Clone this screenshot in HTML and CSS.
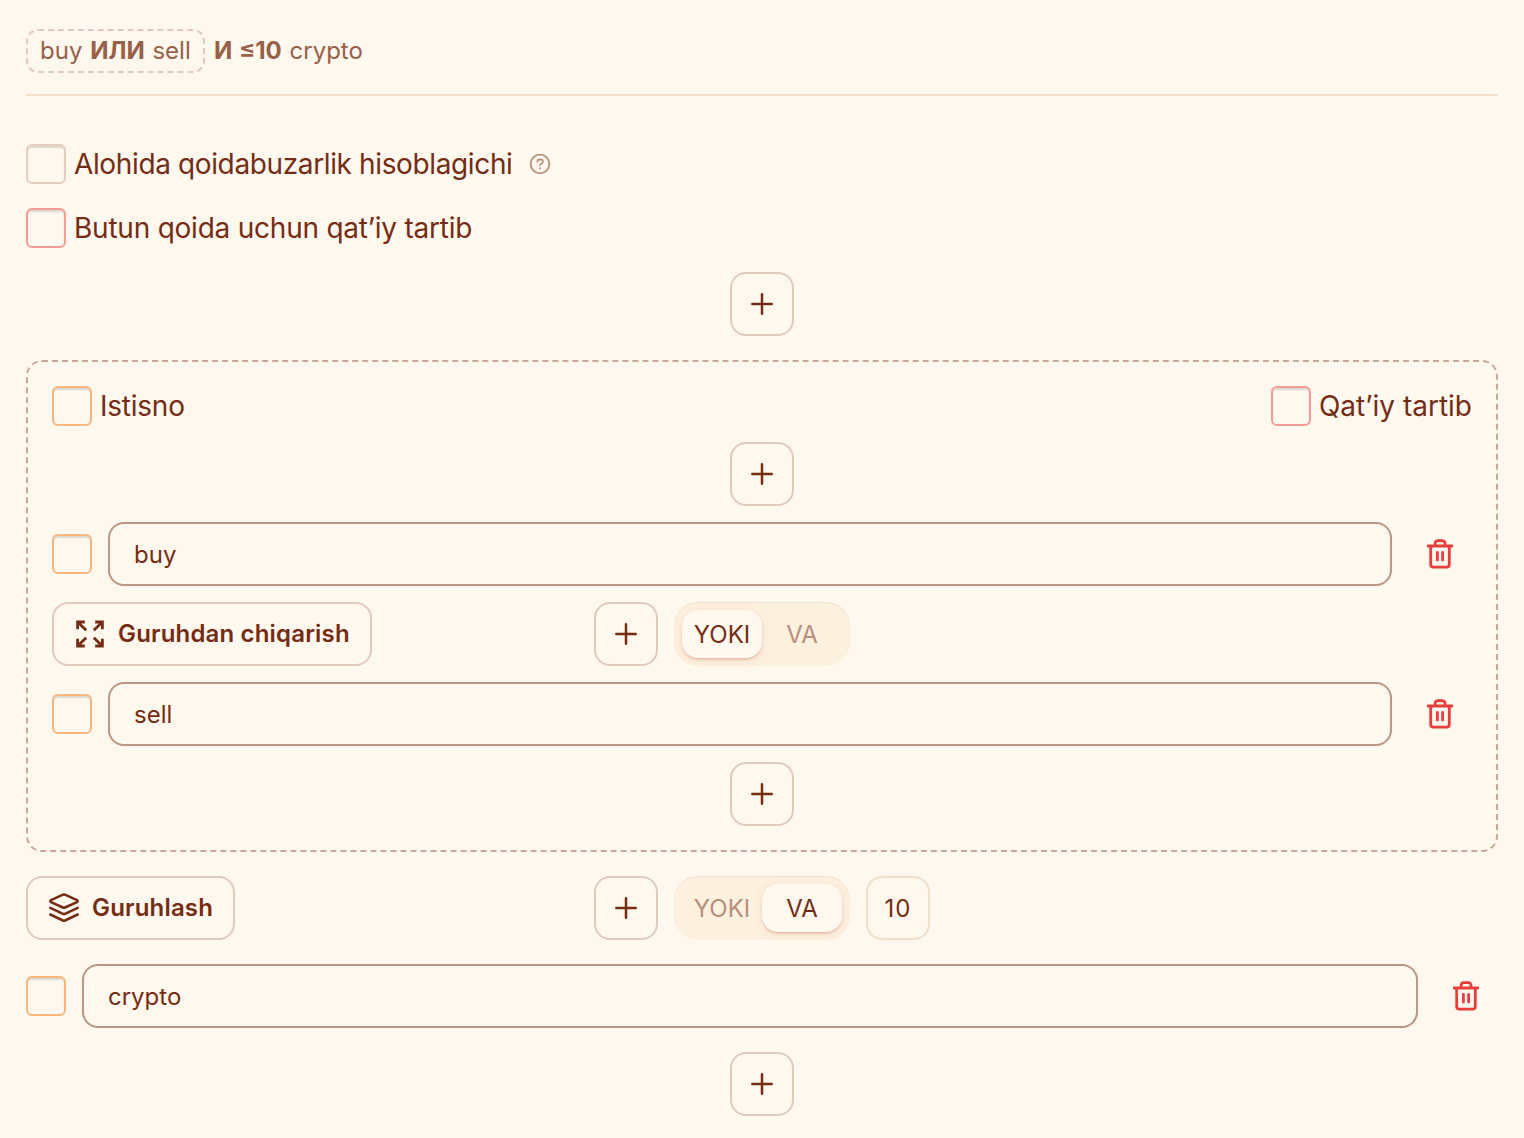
FILE: index.html
```html
<!DOCTYPE html>
<html lang="uz">
<head>
    <meta charset="UTF-8">
    <meta name="viewport" content="width=device-width, initial-scale=1.0">
    <title>Qoida</title>
    <link rel="stylesheet" href="styles.css">
</head>

<body>
    <!-- Icons -->
    <svg class="sprite" width="0" height="0">
        <symbol id="icon-plus" viewBox="0 0 32 32">
            <path d="M16 6.3v19.4M6.3 16h19.4" stroke-width="2.5" stroke-linecap="round"/>
        </symbol>
        <symbol id="icon-trash" viewBox="0 0 32 32">
            <path d="M4.2 8h23.6M6.7 8v18.5a2.7 2.7 0 0 0 2.7 2.7h13.2a2.7 2.7 0 0 0 2.7-2.7V8M11.1 8V5.3a2.6 2.6 0 0 1 2.6-2.6h4.7a2.6 2.6 0 0 1 2.6 2.6V8M13.4 14.5v7.6M18.6 14.5v7.6" stroke-width="2.8" stroke-linecap="round" stroke-linejoin="round"/>
        </symbol>
        <symbol id="icon-expand" viewBox="0 0 32 32">
            <path d="M3.6 11.2V4h7.2M3.6 4l8.6 8.2M21.2 4h7.2v7.2M28.4 4l-8.6 8.2M3.6 20.8V28h7.2M3.6 28l8.6-8.2M21.2 28h7.2v-7.2M28.4 28l-8.6-8.2" stroke-width="2.8"/>
        </symbol>
        <symbol id="icon-layers" viewBox="0 0 32 32">
            <path d="M15 2.6 3 8.1c-1 .5-1 1.5 0 2l12 5.4c.7.3 1.3.3 2 0l12-5.4c1-.5 1-1.5 0-2L17 2.6c-.7-.3-1.3-.3-2 0ZM2.3 15.9 15 21.8c.7.3 1.3.3 2 0l12.7-5.9M2.3 22.5 15 28.5c.7.3 1.3.3 2 0l12.7-6" stroke-width="2.5" stroke-linecap="round" stroke-linejoin="round"/>
        </symbol>
        <symbol id="icon-help" viewBox="0 0 24 24">
            <circle cx="12" cy="12" r="9.3" stroke-width="1.8"/>
            <path d="M9.3 9.6c.2-1.5 1.3-2.3 2.8-2.3 1.6 0 2.8.9 2.8 2.4 0 1.9-2.8 1.9-2.8 3.8M12 16.2v.6" stroke-width="1.7" stroke-linecap="round"/>
        </symbol>
    </svg>

    <main class="rule">
        <header class="summary">
            <span class="summary-group">buy <b>ИЛИ</b> sell</span>
            <span class="summary-rest"><b>И ≤10</b> crypto</span>
        </header>

        <label class="check">
            <input type="checkbox" class="checkbox">
            <span class="text-counter">Alohida qoidabuzarlik hisoblagichi</span>
            <svg class="icon-help"><use href="#icon-help"/></svg>
        </label>
        <label class="check">
            <input type="checkbox" class="checkbox checkbox-error">
            <span class="text-order">Butun qoida uchun qatʼiy tartib</span>
        </label>

        <button class="btn btn-square"><svg class="icon"><use href="#icon-plus"/></svg></button>

        <section class="group">
            <div class="group-head">
                <label class="check">
                    <input type="checkbox" class="checkbox checkbox-warning">
                    <span class="text-except">Istisno</span>
                </label>
                <label class="check">
                    <input type="checkbox" class="checkbox checkbox-error">
                    <span>Qatʼiy tartib</span>
                </label>
            </div>

            <button class="btn btn-square"><svg class="icon"><use href="#icon-plus"/></svg></button>

            <div class="word">
                <input type="checkbox" class="checkbox checkbox-warning">
                <input type="text" class="input" value="buy">
                <button class="btn-delete"><svg class="icon"><use href="#icon-trash"/></svg></button>
            </div>

            <div class="operator">
                <button class="btn btn-wide"><svg class="icon"><use href="#icon-expand"/></svg><span>Guruhdan chiqarish</span></button>
                <div class="operator-controls">
                    <button class="btn btn-square"><svg class="icon"><use href="#icon-plus"/></svg></button>
                    <div class="toggle">
                        <button class="toggle-item active">YOKI</button>
                        <button class="toggle-item">VA</button>
                    </div>
                    <span class="distance-empty"></span>
                </div>
            </div>

            <div class="word">
                <input type="checkbox" class="checkbox checkbox-warning">
                <input type="text" class="input" value="sell">
                <button class="btn-delete"><svg class="icon"><use href="#icon-trash"/></svg></button>
            </div>

            <button class="btn btn-square"><svg class="icon"><use href="#icon-plus"/></svg></button>
        </section>

        <div class="operator">
            <button class="btn btn-wide"><svg class="icon"><use href="#icon-layers"/></svg><span>Guruhlash</span></button>
            <div class="operator-controls">
                <button class="btn btn-square"><svg class="icon"><use href="#icon-plus"/></svg></button>
                <div class="toggle">
                    <button class="toggle-item">YOKI</button>
                    <button class="toggle-item active">VA</button>
                </div>
                <input type="text" class="distance" value="10">
            </div>
        </div>

        <div class="word">
            <input type="checkbox" class="checkbox checkbox-warning">
            <input type="text" class="input" value="crypto">
            <button class="btn-delete"><svg class="icon"><use href="#icon-trash"/></svg></button>
        </div>

        <button class="btn btn-square"><svg class="icon"><use href="#icon-plus"/></svg></button>
    </main>
</body>
</html>
```
FILE: styles.css
```css
* {
    box-sizing: border-box;
}

body {
    margin: 0;
    background-color: #fff8ee;
    color: #742c14;
    font-family: Inter, "Liberation Sans", sans-serif;
    font-size: 28px;
}

button,
input {
    margin: 0;
    padding: 0;
    font-family: inherit;
    color: inherit;
}

svg {
    display: block;
    flex-shrink: 0;
    fill: none;
    stroke: currentColor;
}

.sprite {
    position: absolute;
}

.icon {
    width: 32px;
    height: 32px;
}

.rule {
    display: flex;
    flex-direction: column;
    gap: 24px;
    padding: 29px 26px 22px;
}

/* Rule summary */
.summary {
    display: flex;
    align-items: center;
    gap: 9px;
    height: 67px;
    margin-bottom: 24px;
    padding-bottom: 21px;
    border-bottom: 2px solid #f1dfca;
    color: #976049;
    font-size: 24px;
    line-height: 40px;
    word-spacing: 1px;
    white-space: nowrap;
}

.summary b {
    font-weight: 700;
}

.summary-group {
    width: 179px;
    padding: 0 12px;
    border: 2px dashed #e0cabd;
    border-radius: 12px;
}

/* Checkboxes */
.check {
    display: flex;
    align-items: center;
    gap: 8px;
    height: 40px;
    white-space: nowrap;
}

.text-counter {
    letter-spacing: -0.37px;
}

.text-order,
.text-except {
    letter-spacing: -0.23px;
}

.checkbox {
    appearance: none;
    flex-shrink: 0;
    width: 40px;
    height: 40px;
    border: 2px solid #e3cec1;
    border-radius: 6px;
    box-shadow: inset 0 2px 1px #dfd8ce;
}

.checkbox-error {
    border-color: #f49c97;
}

.checkbox-warning {
    border-color: #f9b780;
}

.icon-help {
    width: 24px;
    height: 24px;
    margin-left: 8px;
    color: #b98e7c;
}

/* Buttons */
.btn {
    display: flex;
    align-items: center;
    justify-content: center;
    flex-shrink: 0;
    height: 64px;
    background: none;
    border: 2px solid #e0cabd;
    border-radius: 16px;
}

.btn-square {
    width: 64px;
    align-self: center;
}

.btn-wide {
    justify-self: start;
    gap: 12px;
    padding: 0 20px;
    font-size: 24px;
    font-weight: 600;
    letter-spacing: 0.17px;
}

.btn-wide span {
    padding-bottom: 2px;
}

.btn-delete {
    display: flex;
    align-items: center;
    justify-content: center;
    width: 64px;
    height: 64px;
    background: none;
    border: none;
    color: #e73d3d;
}

/* Nested group */
.group {
    display: flex;
    flex-direction: column;
    gap: 16px;
    padding: 24px;
    border: 2px dashed #caa899;
    border-radius: 16px;
}

.group-head {
    display: flex;
    justify-content: space-between;
}

.word {
    display: flex;
    align-items: center;
    gap: 16px;
}

.input {
    flex: 1;
    min-width: 0;
    height: 64px;
    padding: 0 24px;
    background: none;
    border: 2px solid #bc9584;
    border-radius: 16px;
    font-size: 24px;
}

/* Operator row */
.operator {
    display: grid;
    grid-template-columns: 1fr auto 1fr;
}

.operator-controls {
    display: flex;
    gap: 16px;
}

.toggle {
    display: flex;
    padding: 8px;
    background-color: #fcf0de;
    border-radius: 24px;
    box-shadow: inset 0 1px 1px #f2e2cc;
}

.toggle-item {
    width: 80px;
    height: 48px;
    background: none;
    border: none;
    border-radius: 16px;
    color: #b98e7c;
    font-size: 24px;
}

.toggle-item.active {
    background-color: #fff8ee;
    color: #742c14;
    box-shadow: 0 2px 3px -1px #dba995, 0 2px 8px #f6ddca;
}

.distance,
.distance-empty {
    width: 64px;
    height: 64px;
}

.distance {
    background: none;
    border: 2px solid #f1dfca;
    border-radius: 16px;
    font-size: 24px;
    letter-spacing: 1px;
    text-align: center;
}
```
